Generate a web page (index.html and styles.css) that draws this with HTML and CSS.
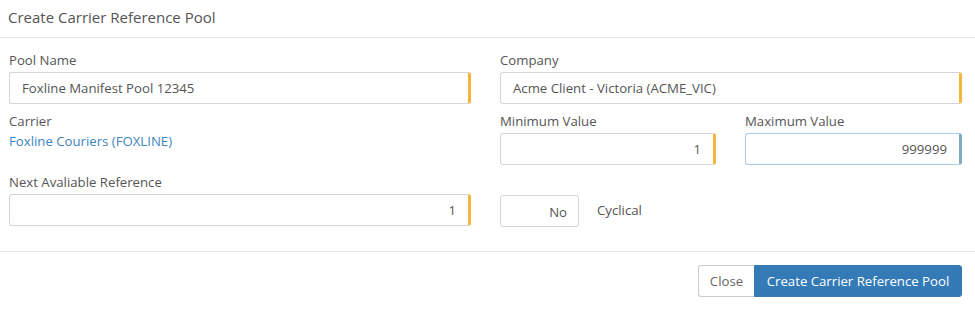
FILE: index.html
```html
<!DOCTYPE html>
<html>
<head>
<meta charset="utf-8">
<link rel="stylesheet" href="styles.css">
</head>
<body>
<div class="modal">
  <div class="modal-header">Create Carrier Reference Pool</div>
  <div class="modal-body">
    <div class="grid">
      <div class="field">
        <label class="lbl">Pool Name</label>
        <div class="input req">Foxline Manifest Pool 12345</div>
      </div>
      <div class="field">
        <label class="lbl">Company</label>
        <div class="input req">Acme Client - Victoria (ACME_VIC)</div>
      </div>
      <div class="field">
        <label class="lbl">Carrier</label>
        <div class="link">Foxline Couriers (FOXLINE)</div>
      </div>
      <div class="subgrid">
        <div class="field">
          <label class="lbl">Minimum Value</label>
          <div class="input req num">1</div>
        </div>
        <div class="field">
          <label class="lbl">Maximum Value</label>
          <div class="input focus num">999999</div>
        </div>
      </div>
      <div class="field">
        <label class="lbl">Next Avaliable Reference</label>
        <div class="input req num">1</div>
      </div>
      <div class="toggle-row">
        <div class="toggle">No</div>
        <span class="toggle-label">Cyclical</span>
      </div>
    </div>
  </div>
  <div class="modal-footer">
    <button class="btn btn-default">Close</button><button class="btn btn-primary">Create Carrier Reference Pool</button>
  </div>
</div>
</body>
</html>
```
FILE: styles.css
```css
* { box-sizing: border-box; }
html, body { margin: 0; padding: 0; background: #fff; }
body {
  font-family: "Open Sans", "Noto Sans", sans-serif;
  font-size: 13.2px;
  color: #555;
  width: 975px;
  height: 311px;
  overflow: hidden;
}
.modal-header {
  height: 38px;
  padding: 7px 8px 0;
  font-size: 15px;
  line-height: 20px;
  color: #555;
  border-bottom: 1px solid #e5e5e5;
}
.modal-body {
  padding: 13px 13px 0 9px;
  height: 214px;
  border-bottom: 1px solid #e5e5e5;
}
.grid {
  display: grid;
  grid-template-columns: 462px 462px;
  column-gap: 29px;
  row-gap: 8px;
}
.subgrid {
  display: grid;
  grid-template-columns: 216px 217px;
  column-gap: 29px;
}
.field { display: flex; flex-direction: column; }
.lbl {
  display: block;
  line-height: 18px;
  height: 18px;
  margin-bottom: 3px;
  color: #555;
}
.input {
  height: 32px;
  border: 1px solid #d5d5d5;
  border-radius: 3px;
  padding: 0 12px;
  line-height: 30px;
  color: #555;
  background: #fff;
  white-space: nowrap;
}
.input.req { border-right: 3px solid #f3b53b; }
.input.focus {
  border-color: #a9cde8;
  border-right: 3px solid #7fabc4;
}
.input.num { text-align: right; }
.link {
  color: #3d85c0;
  line-height: 18px;
  margin-top: -1px;
}
.toggle-row {
  display: flex;
  align-items: flex-start;
  padding-top: 22px;
}
.toggle {
  width: 79px;
  height: 32px;
  border: 1px solid #d5d5d5;
  border-radius: 3px;
  text-align: right;
  padding-right: 11px;
  line-height: 32px;
  color: #555;
}
.toggle-label {
  margin-left: 18px;
  line-height: 18px;
  padding-top: 6px;
}
.modal-footer {
  display: flex;
  justify-content: flex-end;
  padding: 13px 13px 0 0;
}
.btn {
  height: 32px;
  font-family: inherit;
  font-size: 13.2px;
  border: 1px solid #ccc;
  margin: 0;
  padding: 0 12px;
  cursor: pointer;
}
.btn-default {
  background: #fff;
  color: #666;
  border-radius: 3px 0 0 3px;
  border-right: none;
  width: 56px;
  padding: 0;
}
.btn-primary {
  background: #337ab7;
  border-color: #337ab7;
  color: #fff;
  border-radius: 0 3px 3px 0;
  width: 208px;
  padding: 0;
}
```
